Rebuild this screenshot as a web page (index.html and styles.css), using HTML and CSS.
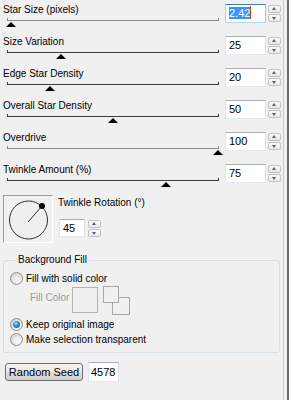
FILE: index.html
```html
<!DOCTYPE html>
<html lang="en">
<head>
    <meta charset="UTF-8">
    <title>Star Effect Settings</title>
    <link rel="stylesheet" href="styles.css">
</head>
<body>
    <div class="window">
        <div class="panel">
            <div class="slider-row">
                <div class="slider-col">
                    <div class="label">Star Size (pixels)</div>
                    <div class="track light"><span class="thumb" style="left: 1.4%"></span></div>
                </div>
                <div class="num focused"><span class="sel">2.42</span><span class="caret"></span></div>
                <div class="spin"><span class="up"></span><span class="down"></span></div>
            </div>
            <div class="slider-row">
                <div class="slider-col">
                    <div class="label">Size Variation</div>
                    <div class="track"><span class="thumb" style="left: 25%"></span></div>
                </div>
                <div class="num">25</div>
                <div class="spin"><span class="up"></span><span class="down"></span></div>
            </div>
            <div class="slider-row">
                <div class="slider-col">
                    <div class="label">Edge Star Density</div>
                    <div class="track"><span class="thumb" style="left: 20%"></span></div>
                </div>
                <div class="num">20</div>
                <div class="spin"><span class="up"></span><span class="down"></span></div>
            </div>
            <div class="slider-row">
                <div class="slider-col">
                    <div class="label">Overall Star Density</div>
                    <div class="track"><span class="thumb" style="left: 50%"></span></div>
                </div>
                <div class="num">50</div>
                <div class="spin"><span class="up"></span><span class="down"></span></div>
            </div>
            <div class="slider-row">
                <div class="slider-col">
                    <div class="label">Overdrive</div>
                    <div class="track light"><span class="thumb" style="left: 100%"></span></div>
                </div>
                <div class="num">100</div>
                <div class="spin"><span class="up"></span><span class="down"></span></div>
            </div>
            <div class="slider-row">
                <div class="slider-col">
                    <div class="label">Twinkle Amount (%)</div>
                    <div class="track"><span class="thumb" style="left: 75%"></span></div>
                </div>
                <div class="num">75</div>
                <div class="spin"><span class="up"></span><span class="down"></span></div>
            </div>

            <div class="rotation">
                <div class="dial">
                    <svg width="48" height="46" viewBox="0 0 48 46">
                        <circle cx="24.5" cy="24" r="19" fill="none" stroke="#303030" stroke-width="1"/>
                        <line x1="24" y1="26" x2="38" y2="10" stroke="#303030" stroke-width="1"/>
                        <circle cx="38" cy="10" r="3" fill="#000"/>
                    </svg>
                </div>
                <div class="rotation-side">
                    <div class="label">Twinkle Rotation (°)</div>
                    <div class="small-input">
                        <div class="num short">45</div>
                        <div class="spin"><span class="up"></span><span class="down"></span></div>
                    </div>
                </div>
            </div>

            <fieldset class="group">
                <legend>Background Fill</legend>
                <div class="radio-row">
                    <span class="radio"></span>
                    <span>Fill with solid color</span>
                </div>
                <div class="fill-row">
                    <span class="fill-label">Fill Color</span>
                    <span class="swatch"></span>
                    <span class="swatch-pair">
                        <span class="swatch-back"></span>
                        <span class="swatch-front"></span>
                    </span>
                </div>
                <div class="radio-row gap">
                    <span class="radio checked"></span>
                    <span>Keep original image</span>
                </div>
                <div class="radio-row">
                    <span class="radio"></span>
                    <span>Make selection transparent</span>
                </div>
            </fieldset>

            <div class="seed-row">
                <button class="btn">Random Seed</button>
                <div class="num seed">4578</div>
            </div>
        </div>
        <div class="edge"></div>
    </div>
</body>
</html>
```

FILE: styles.css
```css
body {
    margin: 0;
    background-color: #f0f0f0;
    font-family: "Liberation Sans", Arial, sans-serif;
    font-size: 10px;
    color: #000;
    overflow: hidden;
}
.window {
    display: flex;
    width: 289px;
    height: 400px;
}
.panel {
    width: 280px;
    padding: 4px 0 0 3px;
}
.edge {
    width: 3px;
    margin-left: 1px;
    border-left: 1px solid #c9c9c9;
    border-right: 2px solid #6a6a6a;
}

/* slider rows */
.slider-row {
    display: flex;
    align-items: flex-start;
    height: 32px;
}
.slider-col {
    width: 222px;
}
.label {
    height: 12px;
    line-height: 12px;
    white-space: nowrap;
}
.track {
    position: relative;
    margin: 2px 0 0 4px;
    width: 210px;
    height: 2px;
    border: 1px solid #3c3c3c;
    border-top: none;
}
.track.light {
    border-color: #8a8a8a;
}
.thumb {
    position: absolute;
    top: 4px;
    width: 0;
    height: 0;
    margin-left: -5px;
    border-left: 5px solid transparent;
    border-right: 5px solid transparent;
    border-bottom: 5px solid #000;
}

/* number boxes */
.num {
    box-sizing: border-box;
    width: 41px;
    height: 19px;
    line-height: 17px;
    padding-left: 3px;
    background: #fff;
    border: 1px solid;
    border-color: #abadb3 #dbdfe6 #e3e9ef #e2e3ea;
    font-size: 11px;
    white-space: nowrap;
}
.num.focused {
    border-color: #3d7bad #a4c9e3 #b7d9ed #b5cfe7;
}
.sel {
    background: #3399ff;
    color: #fff;
}
.caret {
    display: inline-block;
    width: 1px;
    height: 13px;
    background: #d04010;
    vertical-align: -2px;
}
.spin {
    display: flex;
    flex-direction: column;
    gap: 1px;
    margin: 1px 0 0 2px;
}
.spin span {
    box-sizing: border-box;
    position: relative;
    width: 13px;
    height: 8px;
    border: 1px solid #c3c3c3;
    border-radius: 2px;
    background: linear-gradient(#fbfbfb, #e8e8e8);
}
.spin span::after {
    content: "";
    position: absolute;
    left: 3px;
    width: 0;
    height: 0;
    border-left: 2.5px solid transparent;
    border-right: 2.5px solid transparent;
}
.spin .up::after {
    top: 1px;
    border-bottom: 3px solid #4d6185;
}
.spin .down::after {
    top: 2px;
    border-top: 3px solid #4d6185;
}

/* rotation dial */
.rotation {
    display: flex;
    margin-top: -1px;
}
.dial {
    width: 48px;
    height: 46px;
    border: 1px solid;
    border-color: #9a9a9a #ffffff #ffffff #9a9a9a;
}
.dial svg {
    display: block;
}
.rotation-side {
    padding: 2px 0 0 5px;
}
.small-input {
    display: flex;
    margin: 10px 0 0 1px;
}
.num.short {
    width: 26px;
    height: 18px;
    line-height: 16px;
}
.small-input .spin {
    margin-left: 3px;
}

/* background fill group */
.group {
    position: relative;
    box-sizing: border-box;
    width: 277px;
    margin: 11px 0 0 0;
    padding: 5px 0 5px 6px;
    border: 1px solid #d5dfe5;
    border-radius: 3px;
}
.group legend {
    margin-left: 6px;
    padding: 0 2px;
    height: 12px;
    line-height: 12px;
}
.radio-row {
    display: flex;
    align-items: center;
    gap: 3px;
    height: 14px;
    margin-bottom: 1px;
}
.radio-row.gap {
    margin-top: 2px;
}
.radio {
    box-sizing: border-box;
    position: relative;
    width: 13px;
    height: 13px;
    border: 1px solid #8e8f8f;
    border-radius: 50%;
    background: radial-gradient(circle at 60% 65%, #f4f4f4 20%, #c9c9c9 95%);
}
.radio.checked::after {
    content: "";
    position: absolute;
    left: 2px;
    top: 2px;
    width: 7px;
    height: 7px;
    border-radius: 50%;
    background: radial-gradient(circle at 40% 35%, #9fdcf8 0, #2c8dc9 45%, #0f4c78 100%);
}
.fill-row {
    display: flex;
    align-items: flex-start;
    height: 29px;
    padding-left: 20px;
}
.fill-label {
    width: 42px;
    margin-top: 6px;
    color: #9a9a9a;
}
.swatch {
    box-sizing: border-box;
    width: 26px;
    height: 26px;
    margin-top: 1px;
    border: 1px solid #b4b4b4;
}
.swatch-pair {
    position: relative;
    width: 28px;
    height: 29px;
    margin-left: 5px;
}
.swatch-front,
.swatch-back {
    position: absolute;
    box-sizing: border-box;
    border: 1px solid #a8a8a8;
    background: #f0f0f0;
}
.swatch-front {
    left: 0;
    top: 0;
    width: 16px;
    height: 17px;
}
.swatch-back {
    left: 9px;
    top: 11px;
    width: 18px;
    height: 18px;
}

/* seed */
.seed-row {
    display: flex;
    align-items: center;
    margin-top: 9px;
}
.btn {
    width: 78px;
    height: 18px;
    margin-left: 2px;
    padding: 0;
    font-family: inherit;
    font-size: 11px;
    border: 1px solid #707070;
    border-radius: 3px;
    background: linear-gradient(#f2f2f2 0%, #ebebeb 50%, #dddddd 51%, #cfcfcf 100%);
}
.num.seed {
    width: 31px;
    height: 20px;
    line-height: 18px;
    margin-left: 5px;
    padding-left: 2px;
}
```
